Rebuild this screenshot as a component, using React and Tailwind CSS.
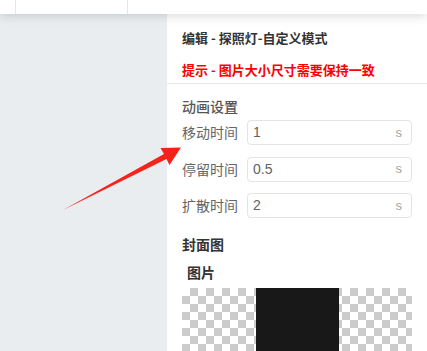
import React from 'react';

const rows = [
    { label: '移动时间', value: '1' },
    { label: '停留时间', value: '0.5' },
    { label: '扩散时间', value: '2' },
];

function Arrow() {
    return (
        <svg className="absolute left-0 top-0 pointer-events-none" width="200" height="240" viewBox="0 0 200 240">
            <polygon
                points="63,210 164,154 160.5,148 181,147.5 169.5,165 166.5,159"
                fill="#f6231b"
            />
        </svg>
    );
}

export default function App() {
    return (
        <div className="relative w-[427px] h-[351px] overflow-hidden bg-white font-['Noto_Sans_CJK_SC',sans-serif]">
            <div className="relative z-10 flex h-[14px] bg-white shadow-[0_3px_10px_rgba(0,0,0,0.13)]">
                <div className="w-[16px] border-r border-[#e6e6e6]" />
                <div className="w-[112px] border-r border-[#e6e6e6]" />
                <div className="flex-1" />
            </div>

            <div className="flex h-[337px]">
                <div className="w-[167px] bg-[#eaedf0]" />

                <div className="flex-1 bg-white">
                    <div className="h-[70px] border-b border-[#e8e8e8] pl-[15px] pt-[14px]">
                        <p className="text-[13px] leading-[20px] font-semibold text-[#333]">编辑 - 探照灯-自定义模式</p>
                        <p className="mt-[12px] text-[13px] leading-[20px] font-semibold text-[#ff0000]">提示 - 图片大小尺寸需要保持一致</p>
                    </div>

                    <div className="pl-[15px] pr-[15px] pt-[12px]">
                        <p className="text-[14px] leading-[20px] font-medium text-[#555]">动画设置</p>

                        <div className="mt-[4px] flex flex-col gap-[11.5px]">
                            {rows.map((row) => (
                                <div key={row.label} className="flex items-center h-[25px]">
                                    <span className="w-[65px] text-[14px] text-[#666]">{row.label}</span>
                                    <div className="flex items-center justify-between w-[165px] h-[25px] rounded-[4px] border border-[#e4e4e4] pl-[5px] pr-[9px]">
                                        <span className="text-[14px] text-[#606266] font-['Liberation_Sans',sans-serif]">{row.value}</span>
                                        <span className="text-[13px] text-[#a5a5a5] font-['Liberation_Sans',sans-serif]">s</span>
                                    </div>
                                </div>
                            ))}
                        </div>

                        <p className="mt-[16px] text-[14px] leading-[20px] font-semibold text-[#333]">封面图</p>
                        <p className="mt-[8px] pl-[5px] text-[14px] leading-[20px] font-semibold text-[#333]">图片</p>

                        <div className="mt-[6px] flex justify-center w-[230px] h-[70px] bg-[conic-gradient(#cccccc_25%,#ffffff_0_50%,#cccccc_0_75%,#ffffff_0)] bg-[length:16px_16px]">
                            <div className="relative w-[83px] h-full bg-[#181818]">
                                <div className="absolute left-[38px] bottom-[-4px] w-[7px] h-[7px] rounded-full bg-[#555] blur-[2px]" />
                            </div>
                        </div>
                    </div>
                </div>
            </div>

            <Arrow />
        </div>
    );
}
